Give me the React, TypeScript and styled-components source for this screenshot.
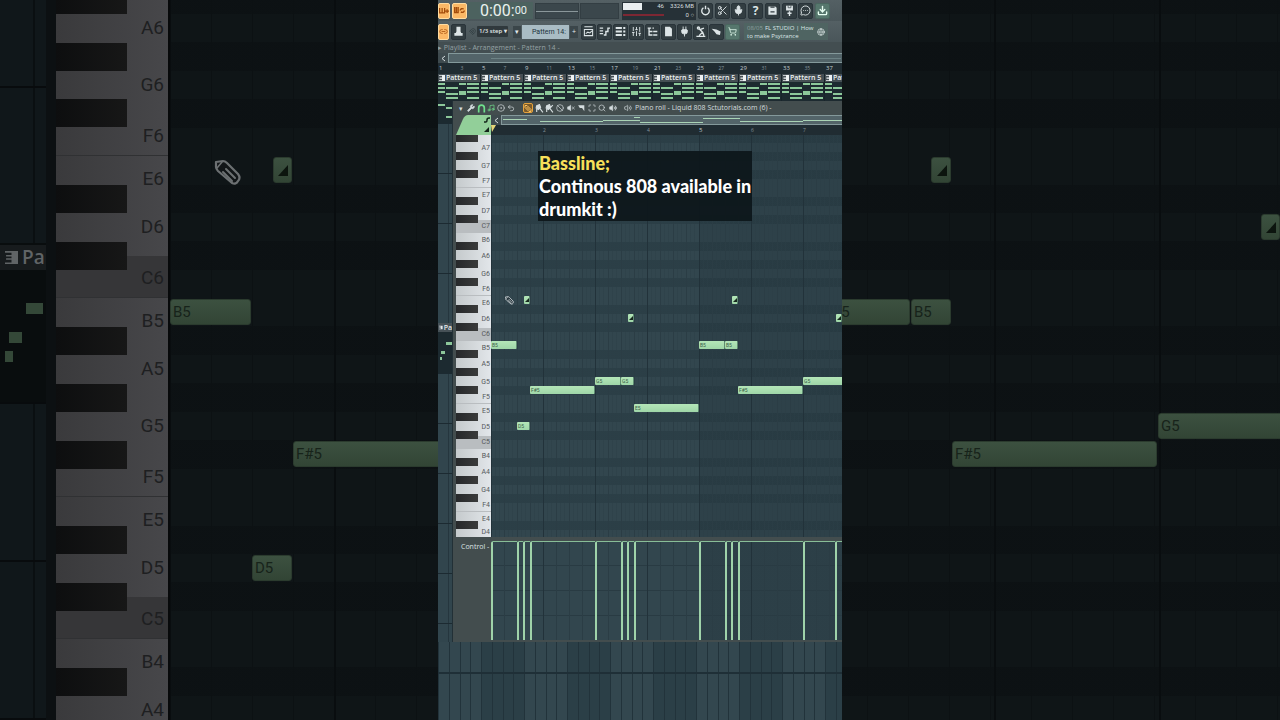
import React from "react";
import styled, { createGlobalStyle, css } from "styled-components";
import {
  Ban,
  CircleDot,
  Download,
  Globe,
  Link2,
  Magnet,
  Maximize,
  MessageCircleMore,
  Mic,
  Music,
  Plug,
  Scissors,
  Search,
  ShoppingCart,
  SlidersVertical,
  Undo2,
  Volume2,
  VolumeX,
  Wrench,
} from "lucide-react";

const GlobalStyle = createGlobalStyle`
  *, *::before, *::after { box-sizing: border-box; }
  body { margin: 0; background: #0e1416; font-family: "Open Sans", "Liberation Sans", sans-serif; }
  button, select { font: inherit; color: inherit; border: 0; margin: 0; padding: 0; background: none; }
`;

/* ---------- data ---------- */

type NoteData = { start: number; end: number; semi: number; name: string; slide?: boolean };

/* start and end in eighths of a bar, semi in half tones below B5 */
const phrase: NoteData[] = [
  { start: 0, end: 4, semi: 0, name: "B5" },
  { start: 4, end: 6, semi: 9, name: "D5" },
  { start: 5, end: 6, semi: -5, name: "E6", slide: true },
  { start: 6, end: 16, semi: 5, name: "F#5" },
  { start: 16, end: 20, semi: 4, name: "G5" },
  { start: 20, end: 22, semi: 4, name: "G5" },
  { start: 21, end: 22, semi: -3, name: "D6", slide: true },
  { start: 22, end: 32, semi: 7, name: "E5" },
];
const phraseTwo: NoteData[] = [
  { start: 32, end: 36, semi: 0, name: "B5" },
  { start: 36, end: 38, semi: 0, name: "B5" },
  { start: 37, end: 38, semi: -5, name: "E6", slide: true },
  { start: 38, end: 48, semi: 5, name: "F#5" },
  { start: 48, end: 56, semi: 4, name: "G5" },
  { start: 53, end: 54, semi: -3, name: "D6", slide: true },
];
const notes = [...phrase, ...phraseTwo];
const events = [0, 4, 5, 6, 16, 20, 21, 22, 32, 36, 37, 38, 48, 53, 54];

/* distance of each black key's top edge below the first C/B boundary, in half tones */
const blackSemis = [1, 3, 5, 8, 10];

type KeyData = { name: string; height: number };
type Scale = { tick: number; row: number; origin: number; noteHeight: number };

const phoneScale: Scale = { tick: 6.5, row: 9, origin: 206, noteHeight: 8 };
const wallScale: Scale = { tick: 20.58, row: 28.44, origin: 299, noteHeight: 26 };

const octaveHeights: [string, number][] = [
  ["B", 14],
  ["A", 18],
  ["G", 18],
  ["F", 13],
  ["E", 14],
  ["D", 18],
  ["C", 13],
];
const phoneKeys: KeyData[] = [
  { name: "", height: 4 },
  { name: "A7", height: 18 },
  { name: "G7", height: 18 },
  { name: "F7", height: 13 },
  { name: "E7", height: 14 },
  { name: "D7", height: 18 },
  { name: "C7", height: 13 },
  ...[6, 5].flatMap((o) => octaveHeights.map(([n, h]) => ({ name: n + o, height: h }))),
  { name: "B4", height: 14 },
  { name: "A4", height: 18 },
  { name: "G4", height: 18 },
  { name: "F4", height: 13 },
  { name: "E4", height: 14 },
  { name: "D4", height: 13 },
];
const wallKeys: KeyData[] = [
  { name: "A6", height: 57 },
  { name: "G6", height: 57 },
  { name: "F6", height: 42 },
  { name: "E6", height: 43 },
  { name: "D6", height: 57 },
  { name: "C6", height: 42 },
  { name: "B5", height: 43 },
  { name: "A5", height: 57 },
  { name: "G5", height: 57 },
  { name: "F5", height: 42 },
  { name: "E5", height: 43 },
  { name: "D5", height: 57 },
  { name: "C5", height: 42 },
  { name: "B4", height: 43 },
  { name: "A4", height: 57 },
  { name: "G4", height: 57 },
  { name: "F4", height: 42 },
];

/* ---------- piano roll pieces ---------- */

const Stage = styled.div`
  position: relative;
  min-height: 100vh;
  overflow: hidden;
  display: flex;
  justify-content: center;
`;

const Wall = styled.div`
  position: absolute;
  inset: 0;
  display: flex;
  background: #0c1012;
`;

const Keyboard = styled.div<{ $wall?: boolean }>`
  position: relative;
  flex: none;
  overflow: hidden;
  width: ${(p) => (p.$wall ? 112 : 35)}px;
  background: ${(p) =>
    p.$wall ? "linear-gradient(90deg, #3a3a3c, #47474a)" : "linear-gradient(90deg, #c5cacc, #e2e6ea)"};
`;

const WhiteKey = styled.div<{ $wall?: boolean; $h: number; $c: boolean; $edge: boolean }>`
  display: flex;
  align-items: center;
  justify-content: flex-end;
  height: ${(p) => p.$h}px;
  padding: ${(p) => (p.$wall ? (p.$h > 50 ? "0 4px 2px 0" : "2px 4px 0 0") : "0 1px 0 0")};
  font-family: Roboto, "Liberation Sans", sans-serif;
  font-size: ${(p) => (p.$wall ? 19 : 7)}px;
  line-height: 1;
  color: ${(p) => (p.$wall ? "#1e1f21" : "#55595c")};
  ${(p) => p.$c && css`background: ${p.$wall ? "#363638" : "#b9bdc0"};`}
  ${(p) => p.$edge && css`border-bottom: 1px solid ${p.$wall ? "#303133" : "#b9bdc0"};`}
`;

const BlackKey = styled.div<{ $wall?: boolean; $top: number }>`
  position: absolute;
  left: 0;
  top: ${(p) => p.$top}px;
  width: ${(p) => (p.$wall ? 71 : 22)}px;
  height: ${(p) => (p.$wall ? 28 : 8)}px;
  background: ${(p) =>
    p.$wall ? "linear-gradient(90deg, #0d0e0f, #171717)" : "linear-gradient(90deg, #26282a, #3a3b3b)"};
`;

/* one octave of row shading, starting on the B row */
const rowShades = (row: number, dark: string) => {
  const stops: string[] = [];
  for (let i = 0; i < 12; i++) {
    const color = blackSemis.includes(i) ? dark : "transparent";
    stops.push(`${color} ${i * row}px ${(i + 1) * row}px`);
  }
  return `linear-gradient(${stops.join(", ")})`;
};

const PhoneGrid = styled.div`
  position: relative;
  flex: 1;
  overflow: hidden;
  background-color: #32464e;
  background-image: linear-gradient(90deg, #22323a 1px, transparent 1px),
    linear-gradient(90deg, #2b3d45 1px, transparent 1px),
    linear-gradient(90deg, transparent 4px, #2c3f4780 4px 5px, transparent 5px 8px, #2c3f4780 8px 9px, transparent 9px),
    linear-gradient(90deg, transparent 208px, #1d2d3533 208px),
    ${rowShades(9, "#273a4299")};
  background-size: 52px 100%, 13px 100%, 13px 100%, 416px 100%, 100% 108px;
  background-position: 0 0, 0 0, 0 0, 0 0, 0 98px;
`;

const WallGrid = styled.div`
  position: relative;
  flex: 1;
  overflow: hidden;
  border-left: 2px solid #07090a;
  background-color: #0f1517;
  background-image: linear-gradient(90deg, #090d0f 2px, transparent 2px),
    linear-gradient(90deg, #0c1113 1px, transparent 1px),
    ${rowShades(28.44, "#0b101299")};
  background-size: 165px 100%, 41px 100%, 100% 341px;
  background-position: -1px 0, 0 0, 0 298px;
`;

const NoteBox = styled.div<{ $wall?: boolean; $x: number; $y: number; $w: number; $h: number }>`
  position: absolute;
  left: ${(p) => p.$x}px;
  top: ${(p) => p.$y}px;
  width: ${(p) => p.$w}px;
  height: ${(p) => p.$h}px;
  display: flex;
  align-items: center;
  overflow: hidden;
  font-family: Roboto, "Liberation Sans", sans-serif;
  line-height: 1;
  ${(p) =>
    p.$wall
      ? css`
          padding-left: 2px;
          border: 1px solid #2b3b2e;
          border-radius: 3px;
          background: linear-gradient(#3c5140, #324535);
          color: #17231a;
          font-size: 15px;
        `
      : css`
          padding-left: 1px;
          border-right: 1px solid #5f8b72;
          border-radius: 1px;
          background: linear-gradient(#b4e6b8, #9fd6a8);
          color: #3c6149;
          font-size: 5px;
        `}
`;

const SlideMark = styled.svg<{ $wall?: boolean }>`
  display: block;
  margin-left: auto;
  margin-right: ${(p) => (p.$wall ? 3 : 0)}px;
  width: ${(p) => (p.$wall ? 10 : 4)}px;
  height: ${(p) => (p.$wall ? 11 : 4)}px;
  fill: ${(p) => (p.$wall ? "#0c140e" : "#17291e")};
`;

function Keys({ keys, wall, top, row, rows }: { keys: KeyData[]; wall?: boolean; top: number; row: number; rows: number }) {
  const blacks: number[] = [];
  for (let i = -24; i < rows; i++) {
    const n = ((i % 12) + 12) % 12;
    if (blackSemis.includes(n)) blacks.push(Math.round(top + i * row));
  }
  return (
    <Keyboard $wall={wall}>
      {keys.map((k, i) => (
        <WhiteKey key={i} $wall={wall} $h={k.height} $c={k.name[0] === "C"} $edge={k.name[0] === "C" || k.name[0] === "F"}>
          {k.name}
        </WhiteKey>
      ))}
      {blacks.map((y) => (
        <BlackKey key={y} $wall={wall} $top={y} />
      ))}
    </Keyboard>
  );
}

function Notes({ scale, wall }: { scale: Scale; wall?: boolean }) {
  return (
    <>
      {notes.map((n) => {
        const x = Math.round(n.start * scale.tick);
        const right = Math.round(n.end * scale.tick);
        return (
          <NoteBox
            key={`${n.start}-${n.semi}`}
            $wall={wall}
            $x={x}
            $y={Math.round(scale.origin + n.semi * scale.row)}
            $w={right - x - (wall ? 1 : 0)}
            $h={scale.noteHeight}
          >
            {n.slide ? (
              <SlideMark $wall={wall} viewBox="0 0 10 10" preserveAspectRatio="none">
                <path d="M10 0V10H0Z" />
              </SlideMark>
            ) : (
              n.name
            )}
          </NoteBox>
        );
      })}
    </>
  );
}

const Cursor = styled.svg<{ $wall?: boolean }>`
  position: absolute;
  left: ${(p) => (p.$wall ? 44 : 14)}px;
  top: ${(p) => (p.$wall ? 159 : 161)}px;
  width: ${(p) => (p.$wall ? 27 : 9)}px;
  height: ${(p) => (p.$wall ? 27 : 9)}px;
`;

function PencilCursor({ wall }: { wall?: boolean }) {
  const ink = wall ? "#6c7072" : "#dfe5e8";
  return (
    <Cursor $wall={wall} viewBox="0 0 27 27" fill={wall ? "#121618" : "#2b3a41"} stroke={ink} strokeWidth="2.2" strokeLinejoin="round" strokeLinecap="round">
      <path d="M2 3L9 2Q11 2 13 4L24 15Q27 19 24 22Q22 26 18 24L4 12Q2 10 2 8Z" />
      <path d="M12 10L21 19M9 13L18 22" strokeWidth="2" />
      <path d="M3 9L8 3" strokeWidth="1.6" />
    </Cursor>
  );
}

/* ---------- wall strip ---------- */

const WallStrip = styled.div`
  width: 46px;
  flex: none;
  margin-right: 10px;
  padding-top: 243px;
  background-color: #10171a;
  background-image: linear-gradient(#080b0d 2px, transparent 2px), linear-gradient(90deg, transparent 33px, #0a0f11 33px 35px, transparent 35px);
  background-size: 100% 158px, 100% 100%;
  background-position: 0 86px, 0 0;
`;

const StripClip = styled.div<{ $wall?: boolean }>`
  position: relative;
  overflow: hidden;
  height: ${(p) => (p.$wall ? 159 : 50)}px;
  padding-top: ${(p) => (p.$wall ? 2 : 0)}px;
  background: ${(p) => (p.$wall ? "#090d0e" : "#1c2a30")};
`;

const StripHead = styled.div<{ $wall?: boolean }>`
  display: flex;
  align-items: center;
  overflow: hidden;
  white-space: nowrap;
  line-height: 1;
  font-weight: 600;
  ${(p) =>
    p.$wall
      ? css`height: 25px; gap: 4px; padding-left: 5px; font-size: 19px; background: #171b1d; color: #606466;`
      : css`height: 9px; gap: 1px; padding-left: 1px; font-size: 7px; background: #465157; color: #e2e7e9;`}
`;

const Mini = styled.i<{ $x: number; $y: number; $w: number; $h: number; $c?: string }>`
  position: absolute;
  left: ${(p) => p.$x}px;
  top: ${(p) => p.$y}px;
  width: ${(p) => p.$w}px;
  height: ${(p) => p.$h}px;
  background: ${(p) => p.$c || "#8cc79a"};
`;

function PianoGlyph({ size, color }: { size: number; color: string }) {
  return (
    <svg width={size} height={size} viewBox="0 0 12 12" fill={color} aria-hidden="true">
      <path d="M0 0H12V12H0V10.5H6V8H1V6.6H6V5H1V3.8H6V1.5H0Z" />
    </svg>
  );
}

/* ---------- phone ---------- */

const Phone = styled.main`
  position: relative;
  display: flex;
  flex-direction: column;
  width: 404px;
  max-width: 100%;
  min-height: 100vh;
  overflow: hidden;
  background: #31454d;
`;

const Bar = styled.div`
  display: flex;
  align-items: center;
  flex: none;
  height: 21px;
  background: linear-gradient(#546064, #4a565a);
  color: #dfe7e8;
`;

const ToolButton = styled.button<{ $tone?: "hot" | "green" | "plain"; $w?: number }>`
  display: flex;
  flex: none;
  align-items: center;
  justify-content: center;
  width: ${(p) => p.$w || 15}px;
  height: 16px;
  margin-right: ${(p) => (p.$w ? 2 : 1)}px;
  border-radius: 2px;
  background: #323d41;
  border: 1px solid #29343a;
  color: #dde5e7;
  font-size: 12px;
  font-weight: 700;
  line-height: 1;
  ${(p) => p.$tone === "hot" && css`background: #fbb866; border-color: #ffdca0; color: #a34c0b;`}
  ${(p) => p.$tone === "green" && css`background: #56776d; border-color: #4a675f; color: #e7fff2;`}
`;

const ButtonRow = styled.div`
  display: flex;
  flex: none;
  justify-content: space-between;
  width: 133px;
`;

const Timer = styled.output`
  display: flex;
  align-items: center;
  justify-content: flex-end;
  width: 65px;
  height: 17px;
  margin: 0 2px 0 0;
  padding-right: 6px;
  background: #4c625f;
  color: #e9f1ee;
  font-family: Roboto, "Liberation Sans", sans-serif;
  font-size: 16px;
  line-height: 17px;

  small { font-size: 11px; }
`;

const Scope = styled.div<{ $w: number; $line?: boolean }>`
  flex: none;
  width: ${(p) => p.$w}px;
  height: 16px;
  margin-right: 1px;
  background: ${(p) => (p.$line ? "linear-gradient(#3b474c 7px, #8a979a 7px 8px, #3b474c 8px)" : "#3b474c")};
  border: 1px solid #333e43;
`;

const Cpu = styled.div`
  display: grid;
  flex: none;
  grid-template-columns: 19px 1fr 30px;
  grid-template-rows: 9px 8px;
  align-items: center;
  width: 74px;
  height: 18px;
  margin: 0 2px;
  padding: 0 2px 1px 1px;
  background: #263137;
  color: #d5dddf;
  font-family: Roboto, "Liberation Sans", sans-serif;
  font-size: 6px;
  line-height: 8px;
  text-align: right;
  white-space: nowrap;
`;

const Meter = styled.span<{ $load?: boolean }>`
  ${(p) =>
    p.$load
      ? css`grid-column: span 2; height: 2px; background: #7d2733;`
      : css`height: 7px; background: #e9eef0;`}
`;

const StepSelect = styled.select`
  appearance: none;
  width: 31px;
  height: 11px;
  margin-right: 5px;
  padding-left: 2px;
  border-radius: 1px;
  background: #30393d;
  color: #e3e9ea;
  font-size: 6px;
  font-weight: 600;
  line-height: 11px;
`;

const SmallKey = styled.button`
  flex: none;
  width: 8px;
  height: 12px;
  background: #3b464a;
  color: #e3e9ea;
  font-size: 7px;
  line-height: 11px;
`;

const PatternName = styled.button`
  flex: none;
  width: 47px;
  height: 14px;
  background: #a9bcc4;
  color: #22343d;
  text-align: right;
  padding-right: 3px;
  font-family: Roboto, "Liberation Sans", sans-serif;
  font-size: 7px;
  line-height: 14px;
  white-space: nowrap;
  margin: 0 1px;
`;

const News = styled.aside`
  display: flex;
  align-items: center;
  justify-content: space-between;
  flex: none;
  width: 84px;
  height: 17px;
  margin-left: 3px;
  padding: 0 3px;
  background: #4f6462;
  color: #dce6e6;
  font-size: 6px;
  line-height: 8px;
  white-space: nowrap;

  em { font-style: normal; color: #8c9f9e; margin-right: 2px; }
`;

const Crumb = styled.div`
  flex: none;
  height: 11px;
  background: #434e51;
  color: #95a1a4;
  font-size: 7px;
  line-height: 11px;
  white-space: nowrap;
`;

const ScrollRow = styled.div`
  display: flex;
  flex: none;
  height: 10px;
  background: #3e4a4e;
`;

const ScrollKey = styled.button`
  width: 10px;
  color: #d5dddf;
  display: flex;
  align-items: center;
  justify-content: center;
`;

const Track = styled.div`
  position: relative;
  flex: 1;
  background: #536469;
  border: solid #84999b;
  border-width: 1px 0 1px 1px;
`;

const Ruler = styled.ol<{ $cell: number; $start: number; $h: number }>`
  display: flex;
  flex: none;
  height: ${(p) => p.$h}px;
  margin: 0;
  padding: 0 0 0 ${(p) => p.$start}px;
  overflow: hidden;
  list-style: none;
  background: #202c32;
  color: #84939a;
  font-size: 5px;
  line-height: ${(p) => p.$h}px;

  li { flex: 0 0 ${(p) => p.$cell}px; }
  strong { color: #c0cbd0; font-size: 6px; font-weight: 400; }
`;

const Pair = styled.span`
  display: grid;
  grid-template-columns: 1fr 1fr;
`;

const Clips = styled.div`
  display: flex;
  flex: none;
  height: 27px;
  overflow: hidden;
  background: #1d2a30;
`;

const Clip = styled.section`
  position: relative;
  flex: 0 0 43px;
  border-right: 1px solid #18242a;
`;

const ClipName = styled.div`
  display: flex;
  align-items: center;
  gap: 1px;
  height: 8px;
  padding-left: 1px;
  background: #454f54;
  color: #eef2f3;
  font-size: 7px;
  font-weight: 600;
  line-height: 8px;
  white-space: nowrap;
`;

const Workspace = styled.div`
  display: flex;
  flex: none;
`;

const Strip = styled.div`
  position: relative;
  flex: none;
  width: 15px;
  padding-top: 222px;
  background-image: linear-gradient(#1c2a31 1px, transparent 1px), linear-gradient(90deg, transparent 10px, #25363e 10px 11px, transparent 11px);
  background-size: 100% 50px, 100% 100%;
  background-position: 0 22px, 0 0;
  border-right: 1px solid #223036;
`;

const StripTop = styled.div`
  position: absolute;
  left: 0;
  top: 0;
  width: 14px;
  height: 22px;
  background: #1c2a30;
`;

const PianoWindow = styled.section`
  flex: 1;
  min-width: 0;
  padding-left: 3px;
  background: #434d4e;
`;

const RollTools = styled.div`
  display: flex;
  align-items: center;
  height: 14px;
  color: #d5dddf;
  font-size: 7px;
  white-space: nowrap;
`;

const ToolGroup = styled.div`
  display: flex;
  flex: none;
  justify-content: space-between;
  width: 84px;
  margin-right: 5px;
`;

const RollTool = styled.button<{ $tint?: string; $active?: boolean }>`
  display: flex;
  flex: none;
  align-items: center;
  justify-content: center;
  width: 10px;
  height: 10px;
  ${(p) => p.$tint && css`color: ${p.$tint};`}
  ${(p) =>
    p.$active &&
    css`margin: 0 1px 0 7px; border: 1px solid #e5a23c; border-radius: 2px; background: #7a5a2a; color: #ffc25e;`}
`;

const RollTitle = styled.h1`
  margin: 0 0 0 2px;
  font-size: 7px;
  font-weight: 400;
  line-height: 12px;
`;

const HeadRow = styled.div`
  display: flex;
  height: 20px;
`;

const HeadSide = styled.svg`
  flex: none;
  width: 35px;
  height: 20px;
`;

const HeadMain = styled.div`
  flex: 1;
  display: flex;
  flex-direction: column;
  min-width: 0;
`;

const RollBody = styled.div`
  display: flex;
  height: 402px;
  overflow: hidden;
`;

const Control = styled.div`
  display: flex;
  height: 105px;
  padding: 4px 0 2px;
`;

const ControlLabel = styled.div`
  flex: none;
  width: 35px;
  padding-left: 5px;
  color: #dbe2e2;
  font-size: 7px;
  line-height: 11px;
  white-space: nowrap;
`;

const Envelope = styled.div`
  position: relative;
  flex: 1;
  overflow: hidden;
  background-color: #32464e;
  background-image: linear-gradient(90deg, #22323a 1px, transparent 1px),
    linear-gradient(90deg, #2b3d45 1px, transparent 1px),
    linear-gradient(transparent 24px, #293b43 24px),
    linear-gradient(90deg, transparent 208px, #1d2d3544 208px);
  background-size: 52px 100%, 13px 100%, 100% 25px, 416px 100%;
`;

const Level = styled.div<{ $x: number; $w: number }>`
  position: absolute;
  left: ${(p) => p.$x}px;
  top: 0;
  bottom: 0;
  width: ${(p) => p.$w}px;
  border-top: 1px solid #88bd97;
  border-left: 2px solid #9fd3aa;
  border-top-left-radius: 2px;
`;

const Lower = styled.div`
  flex: 1;
  background-color: #33474f;
  background-image: linear-gradient(transparent 30px, #1f2f37 30px 32px, transparent 32px),
    linear-gradient(90deg, #22333b 1px, transparent 1px 11px, #22333b 11px 12px, transparent 12px 22px, #22333b 22px 23px, transparent 23px 32px, #22333b 32px 33px, transparent 33px),
    linear-gradient(90deg, transparent 43px, #2b3f47 43px);
  background-size: 100% 100%, 43px 100%, 86px 100%;
`;

const Caption = styled.p`
  position: absolute;
  left: 100px;
  top: 151px;
  margin: 0;
  padding: 1px 0 0 1px;
  width: 214px;
  background: #0d171bee;
  color: #ffffff;
  font-family: Lato, "Open Sans", sans-serif;
  font-size: 18px;
  font-weight: 900;
  line-height: 23px;
  white-space: nowrap;

  span { display: block; }
  span:first-child { color: #f7e05a; }
`;

/* clip thumbnail: x, y, width, height */
const clipNotes: [number, number, number, number][] = [
  [0, 9, 7, 2], [21, 9, 7, 2], [29, 9, 12, 2],
  [0, 13, 7, 2], [8, 13, 12, 2], [29, 13, 12, 2],
  [0, 17, 7, 2], [21, 17, 7, 4], [29, 17, 12, 2],
  [8, 19, 12, 2], [8, 23, 12, 2], [29, 23, 12, 2],
];

const I = ({ children, s = 11, w = 2 }: { children: React.ReactNode; s?: number; w?: number }) => (
  <svg width={s} height={s} viewBox="0 0 16 16" fill="none" stroke="currentColor" strokeWidth={w} aria-hidden="true">
    {children}
  </svg>
);

const Brush = ({ crossed }: { crossed?: boolean }) => (
  <I s={9}>
    <path d="M3 3L8 1L10 6L6 10L2 7Z" fill="currentColor" />
    <path d="M8 7L14 15M3 9V14" />
    {crossed && <path d="M14 2L9 7" />}
  </I>
);

const Chevron = () => (
  <svg width="5" height="7" viewBox="0 0 5 7" fill="none" stroke="currentColor" aria-hidden="true">
    <path d="M4 1L1 3.5L4 6" />
  </svg>
);

/* every second bar is numbered, every fourth one is bright */
function BarNumbers() {
  const cells = Array.from({ length: 10 }, (_, i) => 1 + i * 4);
  return (
    <Ruler $cell={43} $start={1} $h={11}>
      {cells.map((n) => (
        <li key={n}>
          <Pair><strong>{n}</strong>{n < 37 && <span>{n + 2}</span>}</Pair>
        </li>
      ))}
    </Ruler>
  );
}

export default function App() {
  return (
    <>
      <GlobalStyle />
      <Stage>
        <Wall aria-hidden="true">
          <WallStrip>
            <StripClip $wall>
              <StripHead $wall>
                <PianoGlyph size={13} color="#606466" />
                Pa
              </StripHead>
              <Mini $x={26} $y={60} $w={17} $h={11} $c="#344838" />
              <Mini $x={9} $y={89} $w={13} $h={11} $c="#344838" />
              <Mini $x={5} $y={108} $w={8} $h={11} $c="#344838" />
            </StripClip>
          </WallStrip>
          <Keys keys={wallKeys} wall top={298.5} row={28.44} rows={24} />
          <WallGrid>
            <Notes scale={wallScale} wall />
            <PencilCursor wall />
          </WallGrid>
        </Wall>

        <Phone>
          <Bar>
            <ToolButton $tone="hot" $w={12} aria-label="Wait for input">
              <I s={10}><path d="M1 3V11H9V3M5 3V11M10 8H16M13 5V11" /></I>
            </ToolButton>
            <ToolButton $tone="hot" aria-label="Loop record">
              <I s={11}><path d="M1 3V11H6V3M3.5 3V11M9 8a3 3 0 0 1 5-2M15 8a3 3 0 0 1-5 2" /></I>
            </ToolButton>
            <Timer>0:00:<small>00</small></Timer>
            <Scope $w={44} $line />
            <Scope $w={39} />
            <Cpu>
              <Meter /><span>46</span><span>3326 MB</span>
              <Meter $load /><span>0 ○</span>
            </Cpu>
            <ButtonRow>
              <ToolButton aria-label="Undo">
                <I><path d="M5 4a5.5 5.5 0 1 0 6 0M8 1V6" /></I>
              </ToolButton>
              <ToolButton aria-label="Cut"><Scissors size={11} /></ToolButton>
              <ToolButton aria-label="Record"><Mic size={11} fill="currentColor" /></ToolButton>
              <ToolButton aria-label="Help">?</ToolButton>
              <ToolButton aria-label="Save">
                <I><path d="M2 2H12L14 4V14H2Z" fill="currentColor" stroke="none" /><path d="M5 3H11M5 10H11" stroke="#323d41" /></I>
              </ToolButton>
              <ToolButton aria-label="Save new version">
                <I><path d="M3 1H13V8H3Z" fill="currentColor" stroke="none" /><path d="M6 1V4H10V1" stroke="#323d41" strokeWidth="1" /><path d="M8 9V16M5 12H11" /></I>
              </ToolButton>
              <ToolButton aria-label="Chat"><MessageCircleMore size={11} /></ToolButton>
              <ToolButton $tone="green" aria-label="Download"><Download size={11} strokeWidth={3} /></ToolButton>
            </ButtonRow>
          </Bar>

          <Bar>
            <ToolButton $tone="hot" $w={11} aria-label="Link"><Link2 size={9} /></ToolButton>
            <ToolButton aria-label="Stamp">
              <I><path d="M5 1H11V8L12 10H14V14H2V10H4L5 8Z" fill="currentColor" stroke="none" /></I>
            </ToolButton>
            <RollTool aria-label="Snap"><Magnet size={7} color="#2c383c" /></RollTool>
            <StepSelect aria-label="Snap step"><option>1/3 step ▾</option></StepSelect>
            <SmallKey aria-label="Pattern menu">▾</SmallKey>
            <PatternName>Pattern 14:</PatternName>
            <SmallKey aria-label="Add pattern">+</SmallKey>
            <RollGap />
            <ToolButton aria-label="Playlist"><I><path d="M2 5H14V14H2ZM2 1H14M4 11L7 9L10 10L13 7" strokeWidth="1.5" /></I></ToolButton>
            <ToolButton aria-label="Piano roll"><I><path d="M1 3H6M1 7H6M1 11H6M7 13H10V8H13V3H16" /></I></ToolButton>
            <ToolButton aria-label="Channel rack"><I><path d="M1 3H10M1 8H10M1 13H10M12 3H15M12 8H15M12 13H15" strokeWidth="3" /></I></ToolButton>
            <ToolButton aria-label="Mixer"><SlidersVertical size={11} /></ToolButton>
            <ToolButton aria-label="Browser"><I><path d="M1 3H6M3 3V13H8M3 8H8M9 8H15M9 13H15M8 3H10" /></I></ToolButton>
            <ToolButton aria-label="Project"><I><path d="M3 1H10L13 4V15H3Z" fill="currentColor" stroke="none" /></I></ToolButton>
            <ToolButton aria-label="Plugins"><Plug size={11} fill="currentColor" /></ToolButton>
            <ToolButton aria-label="Tempo tap"><I><path d="M6 4L11 9L6 14M11 9L13 14M2 15H15M8 5L13 3" /><circle cx="5" cy="3" r="1.5" /></I></ToolButton>
            <ToolButton aria-label="Touch"><I><path d="M1 4L8 5L14 8L13 13L8 12L5 8Z" fill="currentColor" stroke="none" /></I></ToolButton>
            <ToolButton $tone="green" aria-label="Shop"><ShoppingCart size={9} /></ToolButton>
            <News>
              <span><em>08/05</em>FL STUDIO | How<br />to make Psytrance</span>
              <Globe size={8} />
            </News>
          </Bar>

          <Crumb>▸ Playlist - Arrangement - Pattern 14 -</Crumb>
          <ScrollRow>
            <ScrollKey aria-label="Scroll left"><Chevron /></ScrollKey>
            <Track><Mini $x={42} $y={4} $w={350} $h={1} $c="#6d8285" /></Track>
          </ScrollRow>
          <BarNumbers />
          <Clips>
            {Array.from({ length: 10 }, (_, i) => (
              <Clip key={i}>
                <ClipName><PianoGlyph size={6} color="#eef2f3" />Pattern 5</ClipName>
                {clipNotes.map(([x, y, w, h]) => <Mini key={`${x}-${y}`} $x={x} $y={y} $w={w} $h={h} />)}
              </Clip>
            ))}
          </Clips>

          <Workspace>
            <Strip>
              <StripTop>
                <Mini $x={0} $y={3} $w={7} $h={2} />
                <Mini $x={8} $y={6} $w={6} $h={2} />
                <Mini $x={8} $y={15} $w={6} $h={2} />
              </StripTop>
              <StripClip>
                <StripHead><PianoGlyph size={5} color="#e2e7e9" />Pa</StripHead>
                <Mini $x={8} $y={19} $w={6} $h={3} />
                <Mini $x={3} $y={28} $w={4} $h={3} />
                <Mini $x={2} $y={34} $w={2} $h={3} />
              </StripClip>
            </Strip>

            <PianoWindow>
              <RollTools>
                <RollTool aria-label="Menu">▾</RollTool>
                <RollTool aria-label="Tools"><Wrench size={8} fill="currentColor" /></RollTool>
                <RollTool $tint="#6fe08d" aria-label="Magnet"><I s={9} w={3}><path d="M3 15V7a5 5 0 0 1 10 0V15" /></I></RollTool>
                <RollTool $tint="#6fe08d" aria-label="Note"><Music size={8} /></RollTool>
                <RollTool aria-label="Target"><CircleDot size={8} /></RollTool>
                <RollTool aria-label="Undo edit"><Undo2 size={8} /></RollTool>
                <RollTool $active aria-label="Draw"><I s={9}><path d="M2 2L6 2L14 10L14 14L10 14L2 6Z M5 5L12 12" /></I></RollTool>
                <ToolGroup>
                  <RollTool aria-label="Paint"><Brush /></RollTool>
                  <RollTool aria-label="Paint drum"><Brush crossed /></RollTool>
                  <RollTool aria-label="Delete"><Ban size={8} /></RollTool>
                  <RollTool aria-label="Mute"><VolumeX size={8} fill="currentColor" /></RollTool>
                  <RollTool aria-label="Slice"><I s={9}><path d="M2 2H13V13L9 7H5Z" fill="currentColor" stroke="none" /></I></RollTool>
                  <RollTool aria-label="Select"><Maximize size={8} /></RollTool>
                  <RollTool aria-label="Zoom"><Search size={8} /></RollTool>
                  <RollTool aria-label="Playback"><Volume2 size={8} fill="currentColor" /></RollTool>
                </ToolGroup>
                <RollTool aria-label="Channel"><Volume2 size={8} /></RollTool>
                <RollTitle>Piano roll - Liquid 808 Sctutorials.com (6) -</RollTitle>
              </RollTools>

              <HeadRow>
                <HeadSide viewBox="0 0 35 20">
                  <path d="M12 0H35V20H0L7 4Q9 0 12 0Z" fill="#92cf99" />
                  <path d="M28 7H30Q31 7 31 5Q31 3 33 3H34" fill="none" stroke="#13241a" strokeWidth="1.5" />
                  <path d="M33 12V17H28Z" fill="#13241a" />
                </HeadSide>
                <HeadMain>
                  <ScrollRow>
                    <ScrollKey aria-label="Scroll notes left"><Chevron /></ScrollKey>
                    <Track>
                      <Mini $x={1} $y={3} $w={24} $h={1} $c="#a9d3b5" />
                      <Mini $x={38} $y={5} $w={63} $h={1} $c="#a9d3b5" />
                      <Mini $x={101} $y={4} $w={37} $h={1} $c="#a9d3b5" />
                      <Mini $x={132} $y={1} $w={6} $h={1} $c="#a9d3b5" />
                      <Mini $x={138} $y={6} $w={63} $h={1} $c="#a9d3b5" />
                      <Mini $x={201} $y={2} $w={37} $h={1} $c="#a9d3b5" />
                      <Mini $x={238} $y={5} $w={63} $h={1} $c="#a9d3b5" />
                      <Mini $x={301} $y={4} $w={40} $h={1} $c="#a9d3b5" />
                    </Track>
                  </ScrollRow>
                  <Ruler $cell={52} $start={0} $h={10}>
                    <li><svg width="5" height="8" viewBox="0 0 5 8" aria-label="Start"><path d="M0 0H5L1 7Z" fill="#e6d678" /></svg></li>
                    {[2, 3, 4, 5, 6, 7].map((n) => <li key={n}>{n === 5 ? <strong>{n}</strong> : n}</li>)}
                  </Ruler>
                </HeadMain>
              </HeadRow>

              <RollBody>
                <Keys keys={phoneKeys} top={-10} row={9} rows={46} />
                <PhoneGrid>
                  <Notes scale={phoneScale} />
                  <PencilCursor />
                </PhoneGrid>
              </RollBody>

              <Control>
                <ControlLabel>Control -</ControlLabel>
                <Envelope>
                  {events.map((e, i) => {
                    const x = Math.floor(e * phoneScale.tick);
                    const next = Math.floor((events[i + 1] ?? 60) * phoneScale.tick);
                    return <Level key={e} $x={x} $w={next - x} />;
                  })}
                </Envelope>
              </Control>
            </PianoWindow>
          </Workspace>

          <Lower />

          <Caption>
            <span>Bassline;</span>
            <span>Continous 808 available in</span>
            <span>drumkit :)</span>
          </Caption>
        </Phone>
      </Stage>
    </>
  );
}

const RollGap = styled.span`
  flex: none;
  width: 3px;
`;
